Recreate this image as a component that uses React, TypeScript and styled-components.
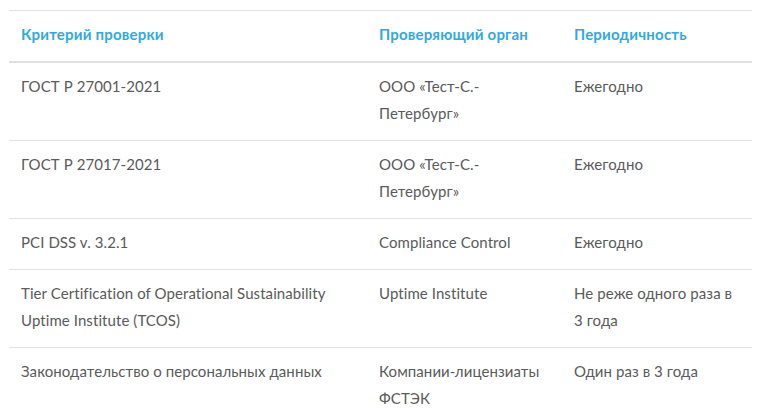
import React from "react";
import styled, { createGlobalStyle } from "styled-components";

const Global = createGlobalStyle`
  html, body { margin: 0; padding: 0; background: #fff; }
  body { font-family: Lato, "Open Sans", sans-serif; }
`;

const Page = styled.div`
  padding: 10px 8px 0 9px;
`;

const Table = styled.table`
  width: 743px;
  table-layout: fixed;
  border-collapse: collapse;
  border-top: 1px solid #e3e3e6;
  font-size: 15px;
  line-height: 27px;
  color: #5a5a5a;
`;

const Th = styled.th<{ $w: number }>`
  width: ${(p) => p.$w}px;
  text-align: left;
  font-weight: 700;
  letter-spacing: 0.2px;
  color: #2eaae1;
  padding: 10px 12px 13px;
  border-bottom: 2px solid #dde0e4;
  vertical-align: top;
`;

const Tr = styled.tr`
  border-bottom: 1px solid #e3e3e6;
`;

const Td = styled.td`
  padding: 10px 12px 13px;
  vertical-align: top;
  letter-spacing: 0.08px;
`;

const rows = [
  ["ГОСТ Р 27001-2021", "ООО «Тест-С.-Петербург»", "Ежегодно"],
  ["ГОСТ Р 27017-2021", "ООО «Тест-С.-Петербург»", "Ежегодно"],
  ["PCI DSS v. 3.2.1", "Compliance Control", "Ежегодно"],
  [
    "Tier Certification of Operational Sustainability Uptime Institute (TCOS)",
    "Uptime Institute",
    "Не реже одного раза в 3 года",
  ],
  ["Законодательство о персональных данных", "Компании-лицензиаты ФСТЭК", "Один раз в 3 года"],
];

export default function App() {
  return (
    <>
      <Global />
      <Page>
        <Table>
          <thead>
            <tr>
              <Th $w={334}>Критерий проверки</Th>
              <Th $w={171}>Проверяющий орган</Th>
              <Th $w={166}>Периодичность</Th>
            </tr>
          </thead>
          <tbody>
            {rows.map((r, i) => (
              <Tr key={i}>
                {r.map((c, j) => (
                  <Td key={j}>{c}</Td>
                ))}
              </Tr>
            ))}
          </tbody>
        </Table>
      </Page>
    </>
  );
}
